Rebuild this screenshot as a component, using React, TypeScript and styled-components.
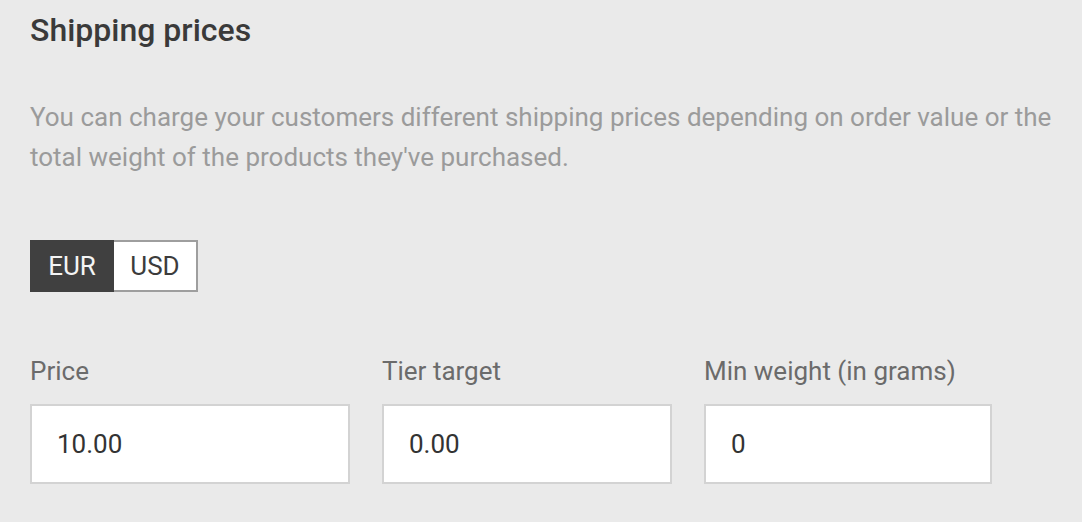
import React from "react";
import styled, { createGlobalStyle } from "styled-components";

const Global = createGlobalStyle`
  html, body { margin: 0; padding: 0; background: #eaeaea; }
  body { font-family: Roboto, "Noto Sans", Arial, sans-serif; }
  * { box-sizing: border-box; }
`;

const Page = styled.div`
  padding: 10px 30px 0 30px;
  display: flex;
  flex-direction: column;
  align-items: flex-start;
`;

const Title = styled.h2`
  margin: 0;
  font-size: 32px;
  line-height: 40px;
  font-weight: 500;
  color: #3a3a3a;
`;

const Description = styled.p`
  margin: 47px 0 0 0;
  font-size: 26px;
  line-height: 40px;
  color: #9b9b9b;
  max-width: 1030px;
`;

const Toggle = styled.div`
  margin-top: 63px;
  display: flex;
`;

const ToggleButton = styled.button<{ $active?: boolean }>`
  width: 84px;
  height: 52px;
  font-family: inherit;
  font-size: 26px;
  padding: 0;
  cursor: pointer;
  border: 2px solid ${(p) => (p.$active ? "#404040" : "#9e9e9e")};
  border-left-width: ${(p) => (p.$active ? "2px" : "0")};
  background: ${(p) => (p.$active ? "#404040" : "#ffffff")};
  color: ${(p) => (p.$active ? "#f4f4f4" : "#3c3c3c")};
`;

const Fields = styled.div`
  margin-top: 59px;
  display: grid;
  grid-template-columns: 320px 290px 288px;
  column-gap: 32px;
`;

const Field = styled.label`
  display: flex;
  flex-direction: column;
  gap: 13px;
`;

const Label = styled.span`
  font-size: 26px;
  line-height: 40px;
  color: #6b6b6b;
`;

const Input = styled.input`
  height: 80px;
  width: 100%;
  border: 2px solid #d3d3d3;
  background: #ffffff;
  padding: 0 25px;
  font-family: inherit;
  font-size: 26px;
  color: #333333;
  outline: none;
`;

const fields = [
  { label: "Price", value: "10.00" },
  { label: "Tier target", value: "0.00" },
  { label: "Min weight (in grams)", value: "0" },
];

export default function App() {
  return (
    <>
      <Global />
      <Page>
        <Title>Shipping prices</Title>
        <Description>
          You can charge your customers different shipping prices depending on order value or the
          total weight of the products they've purchased.
        </Description>
        <Toggle>
          <ToggleButton $active>EUR</ToggleButton>
          <ToggleButton>USD</ToggleButton>
        </Toggle>
        <Fields>
          {fields.map((f) => (
            <Field key={f.label}>
              <Label>{f.label}</Label>
              <Input defaultValue={f.value} />
            </Field>
          ))}
        </Fields>
      </Page>
    </>
  );
}
